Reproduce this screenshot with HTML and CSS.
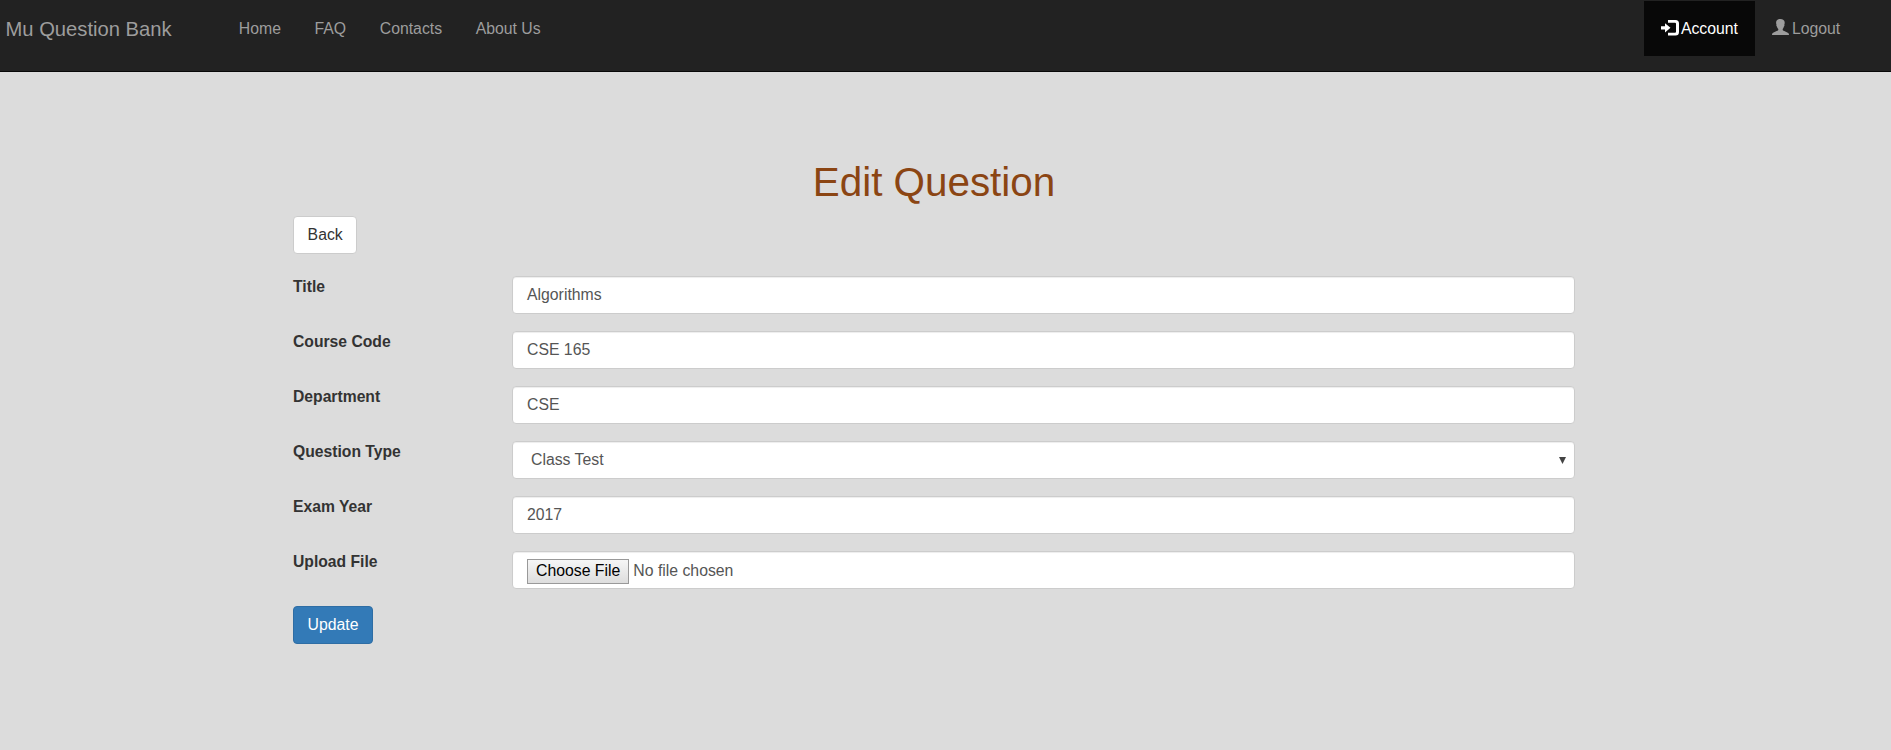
FILE: index.html
```html
<!DOCTYPE html>
<html lang="en">
<head>
<meta charset="utf-8">
<title>Edit Question</title>
<link rel="stylesheet" href="styles.css">
</head>
<body>
<nav class="navbar">
  <a class="brand">Mu Question Bank</a>
  <div class="links">
    <a class="link">Home</a>
    <a class="link">FAQ</a>
    <a class="link">Contacts</a>
    <a class="link">About Us</a>
  </div>
  <div class="links user-links">
    <a class="link active"><svg class="icon" width="18" height="16" viewBox="0 0 18 16"><path fill="currentColor" d="M0 6.300h4V3.200l5.500 4.600L4 12.400V9.600H0zM7 0h7.500A3.500 3.500 0 0 1 18 3.500v8.500a3.500 3.500 0 0 1-3.500 3.500H7v-2.800h7a1 1 0 0 0 1-1V3.800a1 1 0 0 0-1-1H7z"/></svg><span>Account</span></a>
    <a class="link logout"><svg class="icon" width="17" height="16" viewBox="0 0 17 16"><path fill="currentColor" d="M8.300 0C11 0 12.700 1.300 12.700 3.600c0 1-.1 1.600-.4 2.100.3.200.3 1.600-.4 1.900-.2 1.100-.7 1.900-1.200 2.400v1c0 1 4.900 1.700 6 3.600.2.400.3.900.3 1.400H0c0-.5.1-1 .3-1.400C1.300 12.700 6.300 12 6.300 11v-1C5.800 9.500 5.100 8.700 4.900 7.600c-.7-.3-.7-1.700-.4-1.900-.3-.5-.4-1.100-.4-2.100C4.100 1.300 5.800 0 8.300 0z"/></svg><span>Logout</span></a>
  </div>
</nav>
<main class="page">
  <h1 class="heading">Edit Question</h1>
  <a class="btn">Back</a>
  <form class="form">
    <div class="row"><label class="label">Title</label><div class="control">Algorithms</div></div>
    <div class="row"><label class="label">Course Code</label><div class="control">CSE 165</div></div>
    <div class="row"><label class="label">Department</label><div class="control">CSE</div></div>
    <div class="row"><label class="label">Question Type</label><div class="control select"><span>Class Test</span><svg width="7" height="7" viewBox="0 0 7 7"><path fill="#444" d="M0 0h7L3.500 7z"/></svg></div></div>
    <div class="row"><label class="label">Exam Year</label><div class="control">2017</div></div>
    <div class="row"><label class="label">Upload File</label><div class="control file"><span class="choose">Choose File</span><span class="filename">No file chosen</span></div></div>
  </form>
  <a class="btn primary">Update</a>
</main>
</body>
</html>
```
FILE: styles.css
```css
* { box-sizing: border-box; }

body {
  margin: 0;
  background: #dcdcdc;
  color: #333;
  font: 15.8px/22px "Liberation Sans", Arial, sans-serif;
}

.navbar {
  display: flex;
  align-items: flex-start;
  height: 72px;
  padding: 1px 34px 0 5.500px;
  background: #222;
  border-bottom: 1px solid #080808;
  color: #9d9d9d;
}

.brand {
  width: 216.500px;
  padding-top: 17px;
  font-size: 20.2px;
}

.links { display: flex; }
.user-links { margin-left: auto; }

.link {
  display: flex;
  height: 55px;
  padding: 17px 16.800px 0;
}

.active {
  width: 111px;
  background: #080808;
  color: #fff;
}

.icon {
  margin: 2px 2px 0 0;
}

.logout .icon {
  margin: 1px 3px 0 0;
}

.page {
  width: 1282px;
  margin: 0 auto 0 293px;
  padding-top: 88px;
}

.heading {
  margin: 0 0 12px;
  color: #8b4513;
  font-size: 40.4px;
  font-weight: 400;
  line-height: 44px;
  text-align: center;
}

.btn {
  display: inline-block;
  height: 38px;
  padding: 7px 13.600px;
  background: #fff;
  border: 1px solid #ccc;
  border-radius: 4px;
}

.form {
  display: grid;
  gap: 17px;
  margin: 22px 0 17px;
}

.row {
  display: grid;
  grid-template-columns: 219px 1063px;
  grid-template-rows: 38px;
  height: 38px;
}

.label {
  font-size: 15.7px;
  font-weight: 700;
}

.control {
  display: flex;
  align-items: flex-start;
  padding: 7px 14px 0;
  background: #fff;
  border: 1px solid #ccc;
  border-radius: 4px;
  box-shadow: inset 0 1px 1px rgba(0, 0, 0, .075);
  color: #555;
}

.select {
  justify-content: space-between;
  padding: 7px 8px 0 18px;
}

.select svg { margin-top: 8px; }

.file { gap: 4px; }
.filename { padding-top: 1px; }

.choose {
  height: 25px;
  padding: 0 8px;
  background: linear-gradient(#f6f6f6, #ddd);
  border: 1px solid #999;
  color: #000;
  line-height: 22px;
}

.primary {
  background: #337ab7;
  border-color: #2e6da4;
  color: #fff;
}
```
